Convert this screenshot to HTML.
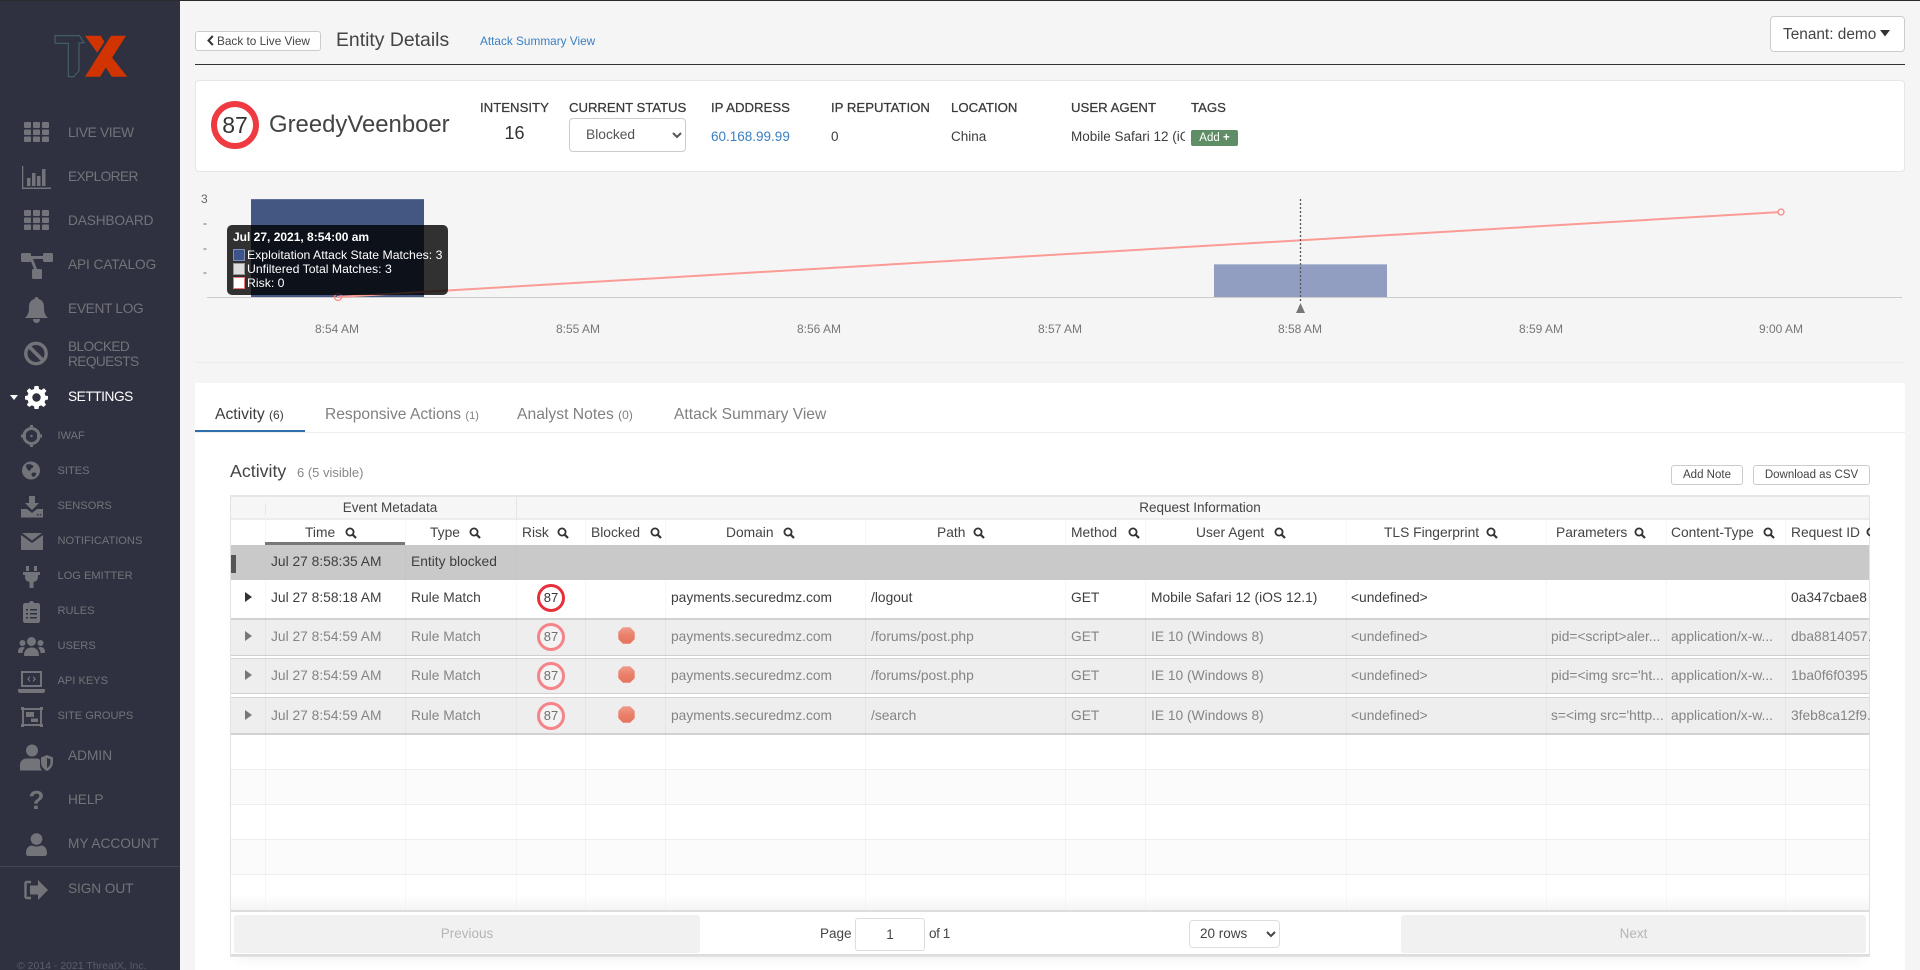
<!DOCTYPE html>
<html lang="en"><head><meta charset="utf-8"><title>Entity Details</title>
<style>
*{box-sizing:border-box}
html,body{margin:0;padding:0;width:1920px;height:970px;overflow:hidden;background:#f5f5f5;font-family:"Liberation Sans",sans-serif;color:#3d3d3d}
.a,.t,.box{position:absolute}
.t{white-space:nowrap;line-height:20px;height:20px}
#side{position:absolute;left:0;top:0;width:180px;height:970px;background:#2f3140;overflow:hidden}
#side svg{position:absolute;fill:#727479}
.n{position:absolute;left:68px;font-size:13.7px;line-height:18px;color:#727479;white-space:nowrap}
.s{position:absolute;left:57.500px;font-size:11.100px;line-height:16px;color:#727479;white-space:nowrap}
.h{font-size:13.200px;color:#3a3a3a;-webkit-text-stroke:.25px #3a3a3a}
button{font-family:inherit;position:absolute;background:#fff;border:1px solid #ccc;border-radius:3px;padding:0;color:#444}
select{font-family:inherit;position:absolute;background:#fff;border:1px solid #ccc;border-radius:4px;color:#555}
.x{font-size:12px;color:#777;transform:translateX(-50%)}
.hd{font-size:13.800px;color:#444;top:523px}
.r{position:absolute;left:231px;width:1638px}
.c{font-size:13.800px;position:absolute;line-height:20px;white-space:nowrap}
.f{color:#858585}.d{color:#3f3f3f}
.v{position:absolute;width:1px;top:520px;height:390px;background:rgba(0,0,0,.03)}
.tri{position:absolute;left:14px;width:0;height:0;border-left:7px solid #333;border-top:5.500px solid transparent;border-bottom:5.500px solid transparent}
.rk{position:absolute;left:306px;width:28px;height:28px;border:3px solid #e5303c;border-radius:50%;font-size:13px;line-height:22px;text-align:center;background:#fff;color:#333}
.fk{border-color:#f58387;color:#707070;background:#f3f3f3}
.st{position:absolute;left:387px;width:17px;height:17px}
.sr{position:absolute;width:12px;height:12px}
.col{position:absolute;left:231px;width:1638px;height:35px;background:#fff;border-bottom:1px solid #efefef}
</style></head><body>
<svg width="0" height="0" style="position:absolute"><defs>
<linearGradient id="sg" x1="0" y1="0" x2="0" y2="1"><stop offset="0" stop-color="#f09c8c"/><stop offset=".5" stop-color="#ea8069"/><stop offset="1" stop-color="#e5755f"/></linearGradient>
<symbol id="mag" viewBox="0 0 12 12"><circle cx="5" cy="5" r="3.600" fill="none" stroke="#333" stroke-width="1.800"/><path d="M7.600 7.600L11 11" stroke="#333" stroke-width="2.200" fill="none"/></symbol>
<symbol id="grid" viewBox="0 0 25 20"><rect x="0" y="0" width="7" height="6" rx="1"/><rect x="9" y="0" width="7" height="6" rx="1"/><rect x="18" y="0" width="7" height="6" rx="1"/><rect x="0" y="7.500" width="7" height="5.500" rx="1"/><rect x="9" y="7.500" width="7" height="5.500" rx="1"/><rect x="18" y="7.500" width="7" height="5.500" rx="1"/><rect x="0" y="14.500" width="7" height="5.500" rx="1"/><rect x="9" y="14.500" width="7" height="5.500" rx="1"/><rect x="18" y="14.500" width="7" height="5.500" rx="1"/></symbol>
<symbol id="stop" viewBox="0 0 17 17"><path d="M5.500 .3H11.500C12 .3 12.300 .5 12.600 .8L16.200 4.400C16.500 4.700 16.700 5 16.700 5.500V11.500C16.700 12 16.500 12.300 16.200 12.600L12.600 16.200C12.300 16.500 12 16.700 11.500 16.700H5.500C5 16.700 4.700 16.500 4.400 16.200L.8 12.600C.5 12.300 .3 12 .3 11.500V5.500C.3 5 .5 4.700 .8 4.400L4.400 .8C4.700 .5 5 .3 5.500 .3Z" fill="url(#sg)"/></symbol>
</defs></svg>

<div class="a" style="left:0;top:0;width:1920px;height:1px;background:#2b2b2b;z-index:5"></div>

<div id="side">
<svg style="left:0;top:0;fill:none" width="140" height="90" viewBox="0 0 140 90"><path d="M55 35.700H79.500L84 42.700L79 43V70.700L73.700 76.700H68.300V43.300H55Z" fill="none" stroke="#46626b" stroke-width="1.100"/><path d="M111 35.700H126L100 76.700H85Z" fill="#d13400"/><path d="M85 35.700H100.700L104.300 41.700L97.300 52.700Z" fill="#d13400"/><path d="M127.300 76.700H111.700L103.300 63.300L109.300 54Z" fill="#d13400"/></svg>

<svg style="left:24px;top:122px" width="25" height="20"><use href="#grid"/></svg><div class="n" style="top:124px;letter-spacing:-.3px">LIVE VIEW</div>
<svg style="left:22px;top:166px" width="29" height="23" viewBox="0 0 29 23"><path d="M0 0H1.300V21.500H29V23H0Z"/><rect x="5" y="12" width="3.500" height="8"/><rect x="10" y="7" width="3.500" height="13"/><rect x="15" y="10" width="3.500" height="10"/><rect x="20" y="3" width="3.500" height="17"/></svg><div class="n" style="top:168px;letter-spacing:-.6px">EXPLORER</div>
<svg style="left:24px;top:210px" width="25" height="20"><use href="#grid"/></svg><div class="n" style="top:212px;letter-spacing:-.15px">DASHBOARD</div>
<svg style="left:21px;top:253px" width="32" height="26" viewBox="0 0 32 26"><rect x="0" y="0" width="10" height="9" rx="1.500"/><rect x="22" y="0" width="10" height="9" rx="1.500"/><rect x="11" y="16" width="10" height="10" rx="1.500"/><path d="M9 3H23V6H12L16 16H13L9 6Z"/></svg><div class="n" style="top:256px;letter-spacing:-.1px">API CATALOG</div>
<svg style="left:25px;top:297px" width="23" height="26" viewBox="0 0 23 26"><path d="M11.500 0C13 0 13.500 1 13.500 2C17.500 3 19 6 19 10C19 16 20 18 23 21H0C3 18 4 16 4 10C4 6 5.500 3 9.500 2C9.500 1 10 0 11.500 0Z"/><path d="M8 22H15C15 24.500 13.500 26 11.500 26S8 24.500 8 22Z"/></svg><div class="n" style="top:300px;letter-spacing:-.3px">EVENT LOG</div>
<svg style="left:24px;top:341px" width="24" height="25" viewBox="0 0 24 25"><circle cx="12" cy="12.500" r="10.200" fill="none" stroke="#727479" stroke-width="3.400"/><path d="M5 5.500L19 19.500" stroke="#727479" stroke-width="3.600"/></svg><div class="n" style="top:339px;line-height:15px;letter-spacing:-.6px">BLOCKED<br>REQUESTS</div>
<svg style="left:10px;top:395px;fill:#fff" width="8" height="5"><path d="M0 0H8L4 5Z" fill="#fff"/></svg>
<svg style="left:25px;top:386px" width="23" height="23" viewBox="0 0 23 23"><path fill="#fff" fill-rule="evenodd" d="M9.500 0H13.500L14 3L16.500 4L19 2.200L21.500 5L19.600 7.300L20.500 9.800L23 10V13.500L20.500 14L19.500 16.300L21 18.800L18.500 21L16.200 19.400L14 20.300L13.500 23H9.500L9 20.300L6.700 19.400L4.300 21L1.800 18.700L3.500 16.300L2.500 14L0 13.500V10L2.500 9.600L3.400 7.300L1.700 5L4.200 2.200L6.600 4L9 3ZM11.500 7.300A4.200 4.200 0 1 0 11.500 15.700A4.200 4.200 0 1 0 11.500 7.300Z"/></svg><div class="n" style="top:388px;color:#fff;letter-spacing:-.45px">SETTINGS</div>

<svg style="left:21px;top:425px" width="21" height="22" viewBox="0 0 21 22"><circle cx="10.500" cy="11" r="7.500" fill="none" stroke="#727479" stroke-width="3"/><path d="M9 0H12V5H9ZM9 17H12V22H9ZM0 9.500H5V12.500H0ZM16 9.500H21V12.500H16Z"/><circle cx="10.500" cy="11" r="1.200"/></svg><div class="s" style="top:428px">IWAF</div>
<svg style="left:22px;top:461px" width="18" height="19" viewBox="0 0 18 19"><circle cx="9" cy="9.500" r="9"/><path d="M4 4C6 2.500 9 3 11 4.500C12 6 10 7.500 9 7.500C9 9.500 7 10.500 6 9C5 8 4 6.500 4 4ZM10 12C12 11 15 11.500 14 13.500C13 15.500 11.500 16.500 10.500 15.500S9 13 10 12Z" fill="#2f3140"/></svg><div class="s" style="top:463px">SITES</div>
<svg style="left:21px;top:496px" width="22" height="22" viewBox="0 0 22 22"><path d="M8 0H14V7H18L11 14L4 7H8Z"/><path fill-rule="evenodd" d="M0 13H6L11 17L16 13H22V21.500H0ZM16 18V19.500H17.500V18ZM18.800 18V19.500H20.300V18Z"/></svg><div class="s" style="top:498px">SENSORS</div>
<svg style="left:21px;top:533px" width="22" height="17" viewBox="0 0 22 17"><path d="M1 0H21L11 7.500Z"/><path d="M0 2L11 10L22 2V16C22 16.500 21.500 17 21 17H1C.5 17 0 16.500 0 16Z"/></svg><div class="s" style="top:533px">NOTIFICATIONS</div>
<svg style="left:23px;top:566px" width="17" height="22" viewBox="0 0 17 22"><path d="M3 0H6V5H3ZM11 0H14V5H11ZM0 6H17V9H15V11C15 14 13 15.500 10.500 16V22H6.500V16C4 15.500 2 14 2 11V9H0Z"/></svg><div class="s" style="top:568px">LOG EMITTER</div>
<svg style="left:23px;top:601px" width="17" height="22" viewBox="0 0 17 22"><path fill-rule="evenodd" d="M6 2C6 1 7 0 8.500 0S11 1 11 2H15C16 2 17 3 17 4V20C17 21 16 22 15 22H2C1 22 0 21 0 20V4C0 3 1 2 2 2ZM3 8V9.500H5V8ZM7 8V9.500H14V8ZM3 12V13.500H5V12ZM7 12V13.500H14V12ZM3 16V17.500H5V16ZM7 16V17.500H14V16Z"/></svg><div class="s" style="top:603px">RULES</div>
<svg style="left:18px;top:637px" width="27" height="19" viewBox="0 0 27 19"><circle cx="13.500" cy="4.500" r="4.500"/><circle cx="4.500" cy="6" r="3"/><circle cx="22.500" cy="6" r="3"/><path d="M6 19C6 13 9 10.500 13.500 10.500S21 13 21 19ZM0 15C0 11.500 2 10 4.500 10C5.500 10 6 10.300 7 10.800C5.500 12 4.600 13.500 4.400 16H1C.4 16 0 15.600 0 15ZM27 15C27 11.500 25 10 22.500 10C21.500 10 21 10.300 20 10.800C21.500 12 22.400 13.500 22.600 16H26C26.600 16 27 15.600 27 15Z"/></svg><div class="s" style="top:638px">USERS</div>
<svg style="left:18px;top:671px" width="27" height="22" viewBox="0 0 27 22"><path fill-rule="evenodd" d="M3 0H24V16H3ZM5 2V14H22V2ZM0 18H27V20C27 21 26 22 25 22H2C1 22 0 21 0 20Z"/><path d="M12 5L9 8L12 11V9.500L10.800 8L12 6.500ZM15 5L18 8L15 11V9.500L16.200 8L15 6.500Z"/></svg><div class="s" style="top:673px">API KEYS</div>
<svg style="left:21px;top:707px" width="22" height="20" viewBox="0 0 22 20"><path fill-rule="evenodd" d="M0 0H3V1H19V0H22V3H21V17H22V20H19V19H3V20H0V17H1V3H0ZM3 3V17H19V3ZM5 5H13V10H5ZM10 11.500H17V15H10Z"/></svg><div class="s" style="top:708px">SITE GROUPS</div>

<svg style="left:20px;top:744px" width="33" height="27" viewBox="0 0 33 27"><circle cx="12" cy="6.500" r="6"/><path d="M0 26V21C0 17 3 14.500 7 14.500H16C18 14.500 19 15 20 16V21C20 23 20.500 25 22 26.500H1C.4 26.500 0 26.300 0 26Z"/><path fill-rule="evenodd" d="M27 11L33 13.500V18C33 22 30.500 25.500 27 27C23.500 25.500 21 22 21 18V13.500ZM27 14V24C29 23 30.500 20.500 30.500 18V15.300Z"/></svg><div class="n" style="top:747px">ADMIN</div>
<div class="a" style="left:26px;top:786px;width:21px;text-align:center;font-size:26px;font-weight:bold;line-height:28px;color:#727479">?</div><div class="n" style="top:791px;letter-spacing:-.1px">HELP</div>
<svg style="left:26px;top:833px" width="21" height="23" viewBox="0 0 21 23"><circle cx="10.500" cy="6" r="5.800"/><path d="M0 20C0 15 3 12.500 6 12.500C8 13.800 13 13.800 15 12.500C18 12.500 21 15 21 20C21 22 20 23 18.500 23H2.500C1 23 0 22 0 20Z"/></svg><div class="n" style="top:835px">MY ACCOUNT</div>
<div class="a" style="left:0;top:866px;width:180px;height:1px;background:#45474f"></div>
<svg style="left:24px;top:880px" width="24" height="20" viewBox="0 0 24 20"><path d="M7 2H3C2 2 1.500 2.500 1.500 3.500V16.500C1.500 17.500 2 18 3 18H7" fill="none" stroke="#727479" stroke-width="2.400"/><path d="M14 0L24 10L14 20V14.500H6V5.500H14Z"/></svg><div class="n" style="top:880px;letter-spacing:-.1px">SIGN OUT</div>
<div class="a" style="left:17px;top:958px;font-size:10.500px;line-height:16px;color:#5b5d68;white-space:nowrap">© 2014 - 2021 ThreatX, Inc.</div>
</div>

<!-- header -->
<button style="left:195px;top:31px;width:126px;height:20px;font-size:11.800px;line-height:17px;text-align:left;padding-left:11px"><svg width="7" height="11" viewBox="0 0 7 11" style="vertical-align:-1px;margin-right:3px"><path d="M5.800 1L1.500 5.500L5.800 10" fill="none" stroke="#333" stroke-width="2"/></svg>Back to Live View</button>
<div class="t" style="left:336px;top:29px;font-size:19.400px;line-height:22px;height:22px;color:#444">Entity Details</div>
<div class="t" style="left:480px;top:31px;font-size:11.800px;color:#3a7fc1">Attack Summary View</div>
<button style="left:1770px;top:16px;width:135px;height:36px;font-size:15.400px;text-align:left;padding-left:12px;padding-top:2px;border-radius:4px">Tenant: demo<svg width="10" height="7" style="margin-left:4px;vertical-align:2px"><path d="M0 0H10L5 6.500Z" fill="#333"/></svg></button>
<div class="a" style="left:195px;top:64px;width:1710px;height:1px;background:#333"></div>

<!-- card -->
<div class="box" style="left:195px;top:80px;width:1710px;height:92px;background:#fff;border:1px solid #e6e6e6;border-radius:4px"></div>
<div class="box" style="left:211px;top:101px;width:48px;height:48px;border:6px solid #ee3a40;border-radius:50%;font-size:23px;line-height:36px;text-align:center;color:#333">87</div>
<div class="t" style="left:269px;top:110px;font-size:23.900px;line-height:30px;height:30px;color:#444">GreedyVeenboer</div>
<div class="t h" style="left:480px;top:98px">INTENSITY</div>
<div class="t" style="left:480px;width:69px;text-align:center;top:123px;font-size:18px;color:#333">16</div>
<div class="t h" style="left:569px;top:98px;letter-spacing:-.05px">CURRENT STATUS</div>
<select style="left:569px;top:118px;width:117px;height:34px;font-size:13.800px;padding-left:12px;padding-bottom:2px"><option>Blocked</option></select>
<div class="t h" style="left:711px;top:98px">IP ADDRESS</div>
<div class="t" style="left:711px;top:127px;font-size:13.500px;color:#3a7fc1">60.168.99.99</div>
<div class="t h" style="left:831px;top:98px">IP REPUTATION</div>
<div class="t" style="left:831px;top:127px;font-size:13.500px">0</div>
<div class="t h" style="left:951px;top:98px">LOCATION</div>
<div class="t" style="left:951px;top:127px;font-size:13.500px">China</div>
<div class="t h" style="left:1071px;top:98px">USER AGENT</div>
<div class="t" style="left:1071px;top:127px;width:114px;overflow:hidden;font-size:13.500px">Mobile Safari 12 (iOS 12.1)</div>
<div class="t h" style="left:1191px;top:98px">TAGS</div>
<div class="box" style="left:1191px;top:130px;width:47px;height:16px;background:#5f8d65;border-radius:2px;color:#fff;font-size:11.500px;line-height:16px;text-align:center">Add <b>+</b></div>

<!-- chart -->
<div class="t" style="left:201px;top:189px;font-size:12px;color:#666">3</div>
<div class="t" style="left:203px;top:213px;font-size:12px;color:#666">-</div>
<div class="t" style="left:203px;top:238px;font-size:12px;color:#666">-</div>
<div class="t" style="left:203px;top:262px;font-size:12px;color:#666">-</div>
<div class="box" style="left:251px;top:199px;width:173px;height:98px;background:#445682;border-top:1px solid #5f6f98"></div>
<div class="box" style="left:1214px;top:264px;width:173px;height:33px;background:#929dc2;border-top:1px solid #b5bdd6"></div>
<div class="box" style="left:207px;top:297px;width:1695px;height:1px;background:#ccc"></div>
<svg class="a" style="left:0;top:0" width="1920" height="340"><path d="M337 297L1781 212" stroke="#fb9b96" stroke-width="2" fill="none"/><circle cx="338" cy="297" r="3.500" fill="none" stroke="#f48a88" stroke-width="1.300"/><circle cx="1781" cy="212" r="3" fill="#f5f5f5" stroke="#f48a88" stroke-width="1.300"/><path d="M1300.500 199V303" stroke="#555" stroke-width="1.300" stroke-dasharray="2 2"/><path d="M1300.500 303L1305 313H1296Z" fill="#777"/></svg>
<div class="t x" style="left:337px;top:319px">8:54 AM</div>
<div class="t x" style="left:578px;top:319px">8:55 AM</div>
<div class="t x" style="left:819px;top:319px">8:56 AM</div>
<div class="t x" style="left:1060px;top:319px">8:57 AM</div>
<div class="t x" style="left:1300px;top:319px">8:58 AM</div>
<div class="t x" style="left:1541px;top:319px">8:59 AM</div>
<div class="t x" style="left:1781px;top:319px">9:00 AM</div>
<div class="box" style="left:227px;top:225px;width:221px;height:70px;background:rgba(0,0,0,.8);border-radius:5px;color:#fff;font-size:12.250px">
<div class="t" style="left:6px;top:2px;font-weight:bold;font-size:12px">Jul 27, 2021, 8:54:00 am</div>
<div class="box" style="left:6px;top:24px;width:12px;height:12px;background:#3c5489;border:1px solid #7f8fb5"></div><div class="t" style="left:20px;top:20px">Exploitation Attack State Matches: 3</div>
<div class="box" style="left:6px;top:38px;width:12px;height:12px;background:#ddd;border:1px solid #999"></div><div class="t" style="left:20px;top:34px">Unfiltered Total Matches: 3</div>
<div class="box" style="left:6px;top:52px;width:12px;height:12px;background:#fff;border:1px solid #e77"></div><div class="t" style="left:20px;top:48px">Risk: 0</div>
</div>
<div class="box" style="left:195px;top:362px;width:1710px;height:1px;background:#ececec"></div>

<!-- section -->
<div class="box" style="left:195px;top:383px;width:1710px;height:587px;background:#fff"></div>
<div class="box" style="left:195px;top:432px;width:1710px;height:1px;background:#eee"></div>
<div class="box" style="left:195px;top:430px;width:110px;height:2px;background:#2f6fad"></div>
<div class="t" style="left:215px;top:405px;font-size:15.700px;color:#3d3d3d">Activity <span style="font-size:12px">(6)</span></div>
<div class="t" style="left:325px;top:405px;font-size:15.600px;color:#808080">Responsive Actions <span style="font-size:11px">(1)</span></div>
<div class="t" style="left:517px;top:405px;font-size:15.700px;color:#808080">Analyst Notes <span style="font-size:12px">(0)</span></div>
<div class="t" style="left:674px;top:405px;font-size:15.600px;color:#808080">Attack Summary View</div>
<div class="t" style="left:230px;top:461px;font-size:17.800px;color:#444">Activity</div>
<div class="t" style="left:297px;top:463px;font-size:13px;color:#888">6 (5 visible)</div>
<button style="left:1671px;top:465px;width:72px;height:20px;font-size:11.500px">Add Note</button>
<button style="left:1753px;top:465px;width:117px;height:20px;font-size:11.500px">Download as CSV</button>

<!-- table -->
<div class="box" style="left:0;top:0;width:1870px;height:970px;overflow:hidden">
<div class="box" style="left:230px;top:495px;width:1640px;height:462px;border:1px solid #e3e3e3;border-top:2px solid #e6e6e6;box-shadow:0 8px 14px -8px rgba(0,0,0,.08)"></div>
<div class="box" style="left:231px;top:497px;width:1638px;height:23px;background:#f6f6f6;border-bottom:2px solid #ececec"></div>
<div class="box" style="left:516px;top:497px;width:1px;height:23px;background:#e6e6e6"></div>
<div class="box" style="left:265px;top:503px;width:1px;height:12px;background:#e6e6e6"></div>
<div class="t" style="left:265px;width:250px;text-align:center;top:498px;font-size:13.500px;color:#444">Event Metadata</div>
<div class="t" style="left:516px;width:1368px;text-align:center;top:498px;font-size:13.500px;color:#444">Request Information</div>

<div class="col" style="top:735px"></div>
<div class="col" style="top:770px;background:#fbfbfb"></div>
<div class="col" style="top:805px"></div>
<div class="col" style="top:840px;background:#fbfbfb"></div>
<div class="col" style="top:875px;height:36px"></div>

<!-- rows -->
<div class="r" style="top:620px;height:36px;background:#eee;border-bottom:1px solid #d0d0d0"></div>
<div class="r" style="top:618px;height:2px;background:#d2d2d2"></div>
<div class="r" style="top:658px;height:36px;background:#eee;border-top:1px solid #d4d4d4;border-bottom:1px solid #d0d0d0"></div>
<div class="r" style="top:697px;height:38px;background:#eee;border-top:1px solid #d4d4d4;border-bottom:2px solid #d2d2d2"></div>

<div class="v" style="left:265px"></div><div class="v" style="left:405px"></div><div class="v" style="left:516px"></div><div class="v" style="left:585px"></div><div class="v" style="left:665px"></div><div class="v" style="left:865px"></div><div class="v" style="left:1065px"></div><div class="v" style="left:1145px"></div><div class="v" style="left:1346px"></div><div class="v" style="left:1546px"></div><div class="v" style="left:1666px"></div><div class="v" style="left:1785px"></div>

<div class="r" style="top:545px;height:35px;background:#c9c9c9"></div>
<div class="box" style="left:231px;top:555px;width:5px;height:18px;background:#555"></div>
<div class="box" style="left:405px;top:545px;width:1px;height:35px;background:#c5c5c5"></div>
<div class="box" style="left:516px;top:545px;width:1px;height:35px;background:#c6c6c6"></div>

<!-- header row -->
<div class="t hd" style="left:305px">Time</div><svg class="sr" style="left:345px;top:527px"><use href="#mag"/></svg>
<div class="t hd" style="left:430px">Type</div><svg class="sr" style="left:469px;top:527px"><use href="#mag"/></svg>
<div class="t hd" style="left:522px">Risk</div><svg class="sr" style="left:557px;top:527px"><use href="#mag"/></svg>
<div class="t hd" style="left:591px">Blocked</div><svg class="sr" style="left:650px;top:527px"><use href="#mag"/></svg>
<div class="t hd" style="left:726px">Domain</div><svg class="sr" style="left:783px;top:527px"><use href="#mag"/></svg>
<div class="t hd" style="left:937px">Path</div><svg class="sr" style="left:973px;top:527px"><use href="#mag"/></svg>
<div class="t hd" style="left:1071px">Method</div><svg class="sr" style="left:1128px;top:527px"><use href="#mag"/></svg>
<div class="t hd" style="left:1196px">User Agent</div><svg class="sr" style="left:1274px;top:527px"><use href="#mag"/></svg>
<div class="t hd" style="left:1384px">TLS Fingerprint</div><svg class="sr" style="left:1486px;top:527px"><use href="#mag"/></svg>
<div class="t hd" style="left:1556px">Parameters</div><svg class="sr" style="left:1634px;top:527px"><use href="#mag"/></svg>
<div class="t hd" style="left:1671px">Content-Type</div><svg class="sr" style="left:1763px;top:527px"><use href="#mag"/></svg>
<div class="t hd" style="left:1791px">Request ID</div><svg class="sr" style="left:1866px;top:527px"><use href="#mag"/></svg>
<div class="box" style="left:265px;top:542px;width:140px;height:3px;background:#777"></div>

<!-- row data: blocked -->
<div class="c d" style="left:271px;top:552px">Jul 27 8:58:35 AM</div>
<div class="c d" style="left:411px;top:552px">Entity blocked</div>

<!-- row 1 -->
<div class="tri" style="left:245px;top:592px"></div>
<div class="c d" style="left:271px;top:588px">Jul 27 8:58:18 AM</div>
<div class="c d" style="left:411px;top:588px">Rule Match</div>
<div class="rk" style="left:537px;top:584px">87</div>
<div class="c d" style="left:671px;top:588px">payments.securedmz.com</div>
<div class="c d" style="left:871px;top:588px">/logout</div>
<div class="c d" style="left:1071px;top:588px">GET</div>
<div class="c d" style="left:1151px;top:588px">Mobile Safari 12 (iOS 12.1)</div>
<div class="c d" style="left:1351px;top:588px">&lt;undefined&gt;</div>
<div class="c d" style="left:1791px;top:588px">0a347cbae8</div>

<!-- row 2 -->
<div class="tri" style="left:245px;top:631px;border-left-color:#777"></div>
<div class="c f" style="left:271px;top:627px">Jul 27 8:54:59 AM</div>
<div class="c f" style="left:411px;top:627px">Rule Match</div>
<div class="rk fk" style="left:537px;top:623px">87</div>
<svg class="st" style="left:618px;top:627px"><use href="#stop"/></svg>
<div class="c f" style="left:671px;top:627px">payments.securedmz.com</div>
<div class="c f" style="left:871px;top:627px">/forums/post.php</div>
<div class="c f" style="left:1071px;top:627px">GET</div>
<div class="c f" style="left:1151px;top:627px">IE 10 (Windows 8)</div>
<div class="c f" style="left:1351px;top:627px">&lt;undefined&gt;</div>
<div class="c f" style="left:1551px;top:627px">pid=&lt;script&gt;aler...</div>
<div class="c f" style="left:1671px;top:627px">application/x-w...</div>
<div class="c f" style="left:1791px;top:627px">dba8814057.</div>

<!-- row 3 -->
<div class="tri" style="left:245px;top:670px;border-left-color:#777"></div>
<div class="c f" style="left:271px;top:666px">Jul 27 8:54:59 AM</div>
<div class="c f" style="left:411px;top:666px">Rule Match</div>
<div class="rk fk" style="left:537px;top:662px">87</div>
<svg class="st" style="left:618px;top:666px"><use href="#stop"/></svg>
<div class="c f" style="left:671px;top:666px">payments.securedmz.com</div>
<div class="c f" style="left:871px;top:666px">/forums/post.php</div>
<div class="c f" style="left:1071px;top:666px">GET</div>
<div class="c f" style="left:1151px;top:666px">IE 10 (Windows 8)</div>
<div class="c f" style="left:1351px;top:666px">&lt;undefined&gt;</div>
<div class="c f" style="left:1551px;top:666px">pid=&lt;img src='ht...</div>
<div class="c f" style="left:1671px;top:666px">application/x-w...</div>
<div class="c f" style="left:1791px;top:666px">1ba0f6f0395</div>

<!-- row 4 -->
<div class="tri" style="left:245px;top:710px;border-left-color:#777"></div>
<div class="c f" style="left:271px;top:706px">Jul 27 8:54:59 AM</div>
<div class="c f" style="left:411px;top:706px">Rule Match</div>
<div class="rk fk" style="left:537px;top:702px">87</div>
<svg class="st" style="left:618px;top:706px"><use href="#stop"/></svg>
<div class="c f" style="left:671px;top:706px">payments.securedmz.com</div>
<div class="c f" style="left:871px;top:706px">/search</div>
<div class="c f" style="left:1071px;top:706px">GET</div>
<div class="c f" style="left:1151px;top:706px">IE 10 (Windows 8)</div>
<div class="c f" style="left:1351px;top:706px">&lt;undefined&gt;</div>
<div class="c f" style="left:1551px;top:706px">s=&lt;img src='http...</div>
<div class="c f" style="left:1671px;top:706px">application/x-w...</div>
<div class="c f" style="left:1791px;top:706px">3feb8ca12f9.</div>

<!-- pagination -->
<div class="box" style="left:231px;top:895px;width:1638px;height:15px;background:linear-gradient(rgba(255,255,255,0),rgba(238,238,238,.6))"></div>
<div class="box" style="left:231px;top:910px;width:1638px;height:46px;background:#fff;border-top:2px solid #ddd;border-bottom:2px solid #ddd"></div>
<div class="box" style="left:234px;top:915px;width:466px;height:38px;background:#f1f1f1;border-radius:3px;text-align:center;font-size:13.500px;line-height:38px;color:#b5b5b5">Previous</div>
<div class="t" style="left:820px;top:924px;font-size:13.500px;color:#444">Page</div>
<input value="1" style="position:absolute;left:855px;top:918px;width:70px;height:33px;border:1px solid #ddd;border-radius:3px;font:13.500px 'Liberation Sans',sans-serif;text-align:center;color:#444;padding:0;background:#fff">
<div class="t" style="left:929px;top:924px;font-size:13.500px;color:#444;letter-spacing:-.4px">of 1</div>
<select style="left:1189px;top:920px;width:91px;height:28px;font-size:13.500px;border-color:#ddd;color:#444;padding-left:6px;padding-bottom:2px"><option>20 rows</option></select>
<div class="box" style="left:1401px;top:915px;width:465px;height:38px;background:#f1f1f1;border-radius:3px;text-align:center;font-size:13.500px;line-height:38px;color:#b5b5b5">Next</div>
</div>
</body></html>
